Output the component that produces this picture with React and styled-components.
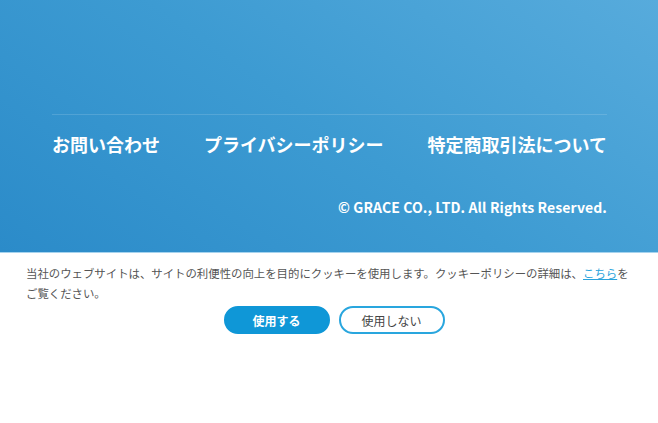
import React from 'react'
import styled, { createGlobalStyle } from 'styled-components'

const GlobalStyle = createGlobalStyle`
  html, body {
    margin: 0;
    padding: 0;
    background: #fff;
  }
  body {
    font-family: "Noto Sans CJK JP", "Noto Sans", sans-serif;
  }
`

const Footer = styled.footer`
  background: linear-gradient(35deg, #2b8bc9 0%, #3d9bd2 50%, #57abdc 100%);
  padding: 114px 51px 35px 52px;
  color: #fff;
`

const Divider = styled.div`
  height: 1px;
  background: rgba(255, 255, 255, 0.14);
`

const Nav = styled.nav`
  display: flex;
  justify-content: space-between;
  padding-top: 16px;
`

const NavLink = styled.a`
  font-size: 18px;
  line-height: 26px;
  font-weight: 700;
  color: #fff;
  text-decoration: none;
`

const Copyright = styled.p`
  margin: 40px 0 0;
  text-align: right;
  font-size: 14px;
  line-height: 20px;
  font-weight: 700;
  letter-spacing: 0.1px;
`

const Banner = styled.section`
  border-top: 1px solid #a6d3ee;
  padding: 10px 26px 20px;
  background: #fff;
`

const Notice = styled.p`
  margin: 0;
  font-size: 11.4px;
  line-height: 20px;
  color: #555;
`

const PolicyLink = styled.a`
  color: #2aa3dc;
  text-decoration: underline;
`

const Actions = styled.div`
  display: flex;
  justify-content: center;
  gap: 9px;
  margin-top: 3px;
  padding-left: 10px;
`

const Button = styled.button`
  width: 106px;
  height: 28px;
  border-radius: 14px;
  font-family: inherit;
  font-size: 12px;
  cursor: pointer;
  border: 2px solid ${({ primary }) => (primary ? '#0f97d7' : '#29a6de')};
  background: ${({ primary }) => (primary ? '#0f97d7' : '#fff')};
  color: ${({ primary }) => (primary ? '#fff' : '#444')};
  font-weight: ${({ primary }) => (primary ? 700 : 400)};
`

const LINKS = ['お問い合わせ', 'プライバシーポリシー', '特定商取引法について']

export default function App() {
  return (
    <>
      <GlobalStyle />
      <Footer>
        <Divider />
        <Nav>
          {LINKS.map(l => (
            <NavLink key={l} href="#">{l}</NavLink>
          ))}
        </Nav>
        <Copyright>© GRACE CO., LTD. All Rights Reserved.</Copyright>
      </Footer>
      <Banner>
        <Notice>
          当社のウェブサイトは、サイトの利便性の向上を目的にクッキーを使用します。クッキーポリシーの詳細は、<PolicyLink href="#">こちら</PolicyLink>をご覧ください。
        </Notice>
        <Actions>
          <Button primary>使用する</Button>
          <Button>使用しない</Button>
        </Actions>
      </Banner>
    </>
  )
}
